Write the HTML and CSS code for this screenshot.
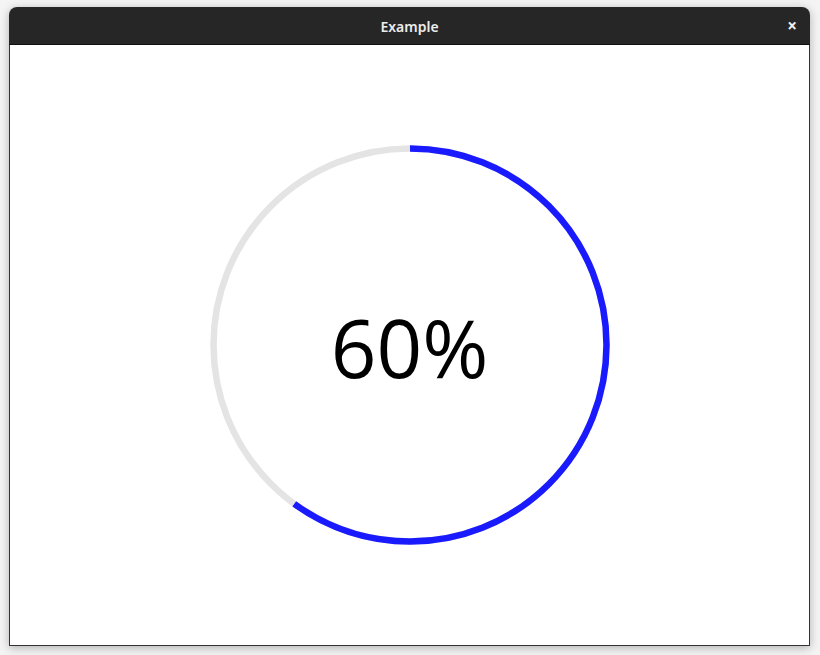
FILE: index.html
```html
<!DOCTYPE html>
<html>
<head>
<meta charset="utf-8">
<link rel="stylesheet" href="styles.css">
</head>
<body>
<div class="window">
  <div class="titlebar">
    <span class="title">Example</span>
    <span class="close">×</span>
  </div>
  <div class="content">
    <div class="gauge">
      <svg class="ring" width="400" height="400" viewBox="0 0 400 400">
        <circle cx="200" cy="200" r="196.5" fill="none" stroke="#e4e4e4" stroke-width="6.5"/>
        <circle cx="200" cy="200" r="196.5" fill="none" stroke="#1a1aff" stroke-width="6.5"
          stroke-dasharray="740.8 2000" transform="rotate(-90 200 200)"/>
      </svg>
      <div class="label">60%</div>
    </div>
  </div>
</div>
</body>
</html>
```

FILE: styles.css
```css
html, body {
  margin: 0;
  padding: 0;
  background: #f4f4f4;
  width: 820px;
  height: 655px;
  overflow: hidden;
}
.window {
  margin: 7px 0 0 9px;
  width: 801px;
  height: 639px;
  display: flex;
  flex-direction: column;
  border-radius: 8px 8px 0 0;
  box-shadow: 0 2px 10px rgba(0,0,0,0.28);
  background: #fff;
}
.titlebar {
  height: 38px;
  box-sizing: border-box;
  background: #262626;
  border-bottom: 1px solid #111;
  border-radius: 8px 8px 0 0;
  display: flex;
  align-items: center;
  justify-content: center;
  position: relative;
  font-family: "Noto Sans", sans-serif;
}
.title {
  color: #ececec;
  font-size: 14px;
  font-weight: 600;
  position: relative;
  top: 1px;
}
.close {
  position: absolute;
  right: 13px;
  top: 9px;
  color: #f0f0f0;
  font-size: 17px;
  font-weight: 700;
  line-height: 20px;
}
.content {
  flex: 1;
  border: 1px solid #333;
  border-top: none;
  display: flex;
  align-items: center;
  justify-content: center;
}
.gauge {
  position: relative;
  width: 400px;
  height: 400px;
  display: flex;
  align-items: center;
  justify-content: center;
}
.ring {
  position: absolute;
  left: 0;
  top: 0;
}
.label {
  font-family: "Open Sans", sans-serif;
  font-size: 80px;
  color: #000;
  line-height: 1;
  position: relative;
  top: 2px;
}
```
